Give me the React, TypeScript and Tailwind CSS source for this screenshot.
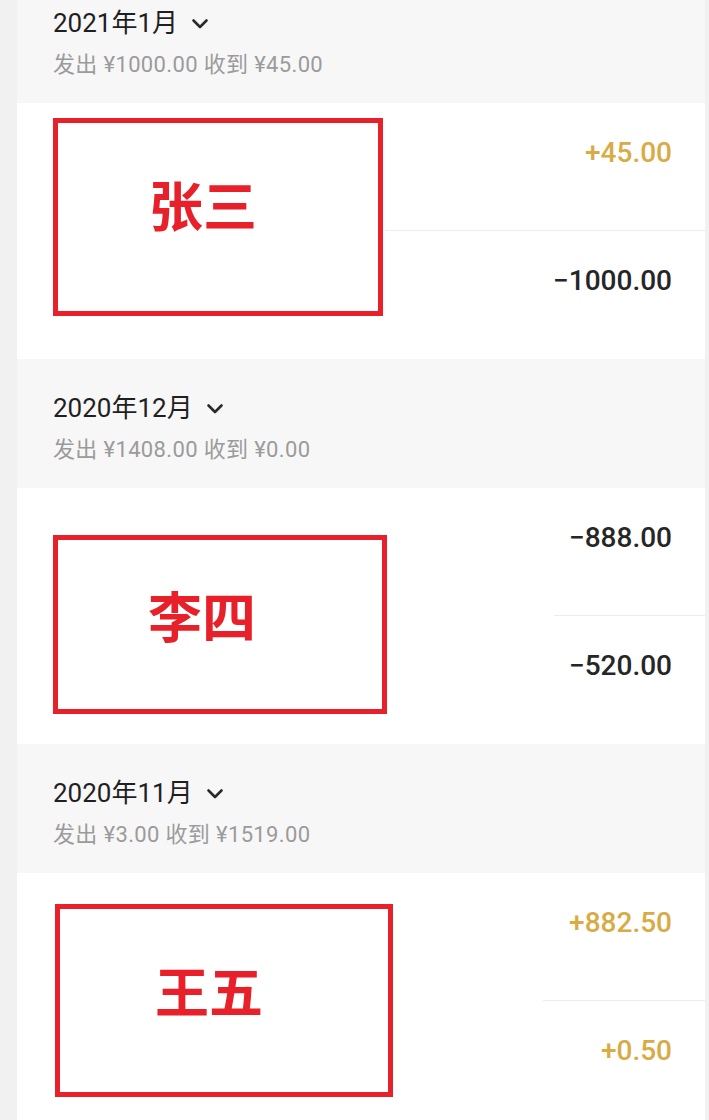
import React from 'react'

type Item = { amount: string; income?: boolean }

type Group = {
  title: string
  summary: string
  name: string
  boxClass: string
  nameClass: string
  rowsClass: string
  items: Item[]
}

const groups: Group[] = [
  {
    title: '2021年1月',
    summary: '发出 ¥1000.00 收到 ¥45.00',
    name: '张三',
    boxClass: 'ml-[36px] mt-[15px] w-[330px] h-[198px]',
    nameClass: 'pl-[91px] pt-[54px]',
    rowsClass: 'w-[320px]',
    items: [{ amount: '+45.00', income: true }, { amount: '−1000.00' }],
  },
  {
    title: '2020年12月',
    summary: '发出 ¥1408.00 收到 ¥0.00',
    name: '李四',
    boxClass: 'ml-[36px] mt-[47px] w-[334px] h-[179px]',
    nameClass: 'pl-[90px] pt-[48px]',
    rowsClass: 'w-[151px]',
    items: [{ amount: '−888.00' }, { amount: '−520.00' }],
  },
  {
    title: '2020年11月',
    summary: '发出 ¥3.00 收到 ¥1519.00',
    name: '王五',
    boxClass: 'ml-[38px] mt-[31px] w-[338px] h-[193px]',
    nameClass: 'pl-[95px] pt-[54px]',
    rowsClass: 'w-[162px]',
    items: [
      { amount: '+882.50', income: true },
      { amount: '+0.50', income: true },
    ],
  },
]

function Chevron() {
  return (
    <svg width="18" height="12" viewBox="0 0 18 12" className="ml-[13px] mt-[2px]">
      <polyline
        points="2.5,2.5 9,9 15.5,2.5"
        fill="none"
        stroke="#2a2a2a"
        strokeWidth="2.6"
        strokeLinecap="round"
        strokeLinejoin="round"
      />
    </svg>
  )
}

function MonthHeader({ title, summary }: { title: string; summary: string }) {
  return (
    <div className="h-[129px] bg-[#f7f7f7] pl-[36px] pt-[32px]">
      <div className="flex items-center h-[34px] text-[26px] leading-[34px] text-[#1f1f1f]">
        <span>{title}</span>
        <Chevron />
      </div>
      <div className="mt-[11px] text-[22px] leading-[28px] tracking-[0.35px] text-[#9b9b9b]">
        {summary}
      </div>
    </div>
  )
}

function MonthCard({ group }: { group: Group }) {
  return (
    <div className="flex bg-white">
      {/* redacted contact */}
      <div className={`shrink-0 self-start border-[5px] border-[#e8202a] ${group.boxClass}`}>
        <div
          className={`font-['Noto_Sans_CJK_SC',sans-serif] text-[54px] leading-none font-bold text-[#e8202a] ${group.nameClass}`}
        >
          {group.name}
        </div>
      </div>

      <div className={`ml-auto flex flex-col ${group.rowsClass}`}>
        {group.items.map((item, i) => (
          <div
            key={i}
            className={`h-[128px] flex justify-end pr-[33px] pt-[34px] ${
              i === 0 ? 'border-b border-[#ececec]' : ''
            }`}
          >
            <span
              className={`text-[28px] leading-[32px] font-medium ${
                item.income ? 'text-[#d8ab45]' : 'text-[#262626]'
              }`}
            >
              {item.amount}
            </span>
          </div>
        ))}
      </div>
    </div>
  )
}

export default function App() {
  return (
    <div className="h-[1120px] overflow-hidden bg-[#f1f1f1] pl-[17px] pr-[4px] font-['Roboto','Noto_Sans_CJK_SC',sans-serif]">
      <div className="-mt-[26px]">
        {groups.map((g) => (
          <div key={g.title}>
            <MonthHeader title={g.title} summary={g.summary} />
            <MonthCard group={g} />
          </div>
        ))}
      </div>
    </div>
  )
}
